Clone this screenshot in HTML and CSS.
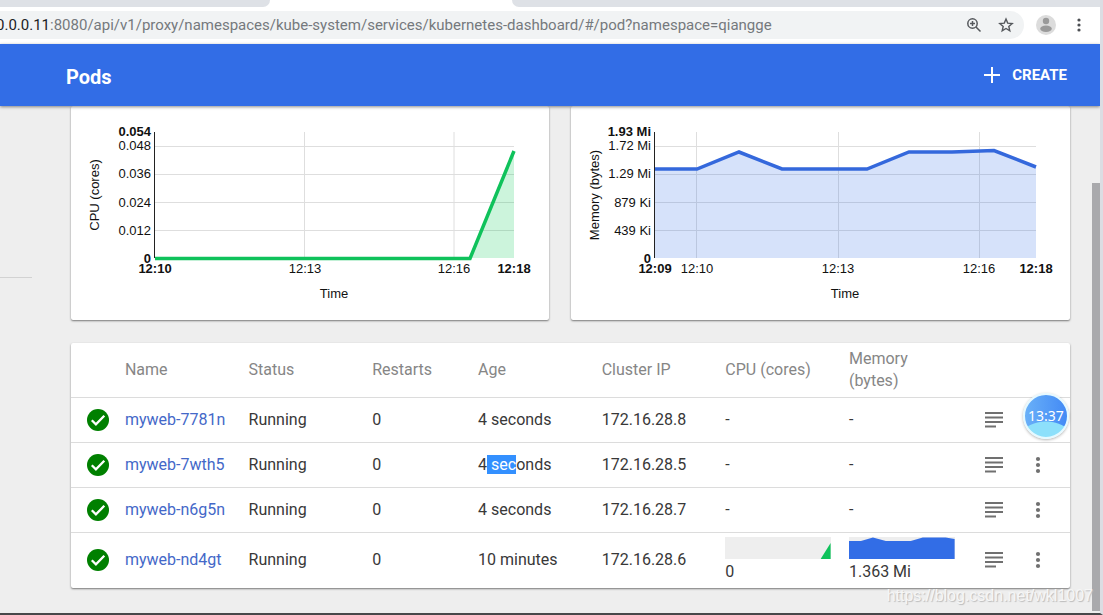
FILE: index.html
```html
<!DOCTYPE html>
<html lang="en">
<head>
<meta charset="utf-8">
<title>Pods - Kubernetes Dashboard</title>
<link rel="stylesheet" href="styles.css">
</head>
<body>
<svg class="defs" aria-hidden="true">
  <symbol id="ok" viewBox="0 0 24 24"><path fill="#008000" d="M12 1a11 11 0 1 0 0 22 11 11 0 0 0 0-22z"/><path fill="none" stroke="#fff" stroke-width="2.3" d="M5.8 12.3l4.1 4.1 8.4-8.6"/></symbol>
  <symbol id="logs" viewBox="0 0 18 16"><path fill="#707070" d="M0 0h18v2H0zM0 4.500h18v2H0zM0 9h18v2H0zM0 13.500h11v2H0z"/></symbol>
  <symbol id="more" viewBox="0 0 6 18"><circle cx="3" cy="3" r="2.100"/><circle cx="3" cy="9" r="2.100"/><circle cx="3" cy="15" r="2.100"/></symbol>
</svg>
<div class="window">
  <div class="tabs"><div class="tab-left"></div><div class="tab-active"></div><div class="tab-right"></div></div>
  <div class="toolbar">
    <div class="address">
      <div class="url"><span class="host">0.0.0.11</span>:8080/api/v1/proxy/namespaces/kube-system/services/kubernetes-dashboard/#/pod?namespace=qiangge</div>
      <button class="icon-button" aria-label="Zoom"><svg width="16" height="16" viewBox="0 0 16 16" fill="none" stroke="#55585c" stroke-width="1.500"><circle cx="6.500" cy="6.500" r="4.700"/><path d="M10 10l4.500 4.500M4 6.500h5M6.500 4v5"/></svg></button>
      <button class="icon-button" aria-label="Bookmark"><svg width="16" height="16" viewBox="0 0 16 16" fill="none" stroke="#55585c" stroke-width="1.400"><path d="M8 2l1.700 4.100 4.500.4-3.400 2.900 1 4.400L8 11.500l-3.800 2.300 1-4.400-3.400-2.900 4.500-.4z"/></svg></button>
    </div>
    <button class="icon-button" aria-label="Profile"><svg width="20" height="20" viewBox="0 0 20 20"><circle cx="10" cy="10" r="10" fill="#dcdcdc"/><circle cx="10" cy="6" r="3.200" fill="#9a9a9a"/><ellipse cx="10" cy="13.700" rx="5.800" ry="3.200" fill="#9a9a9a"/></svg></button>
    <button class="icon-button menu" aria-label="Browser menu"><svg width="4" height="14" viewBox="0 0 4 14" fill="#4c4f53"><circle cx="2" cy="2" r="1.600"/><circle cx="2" cy="7" r="1.600"/><circle cx="2" cy="12" r="1.600"/></svg></button>
  </div>
  <header class="header">
    <h1>Pods</h1>
    <button class="create"><svg width="16" height="16" viewBox="0 0 16 16"><path d="M7 0h2v7h7v2H9v7H7V9H0V7h7z" fill="#fff"/></svg>CREATE</button>
  </header>
  <div class="content">
    <nav class="sidebar" aria-label="Navigation"><hr></nav>
    <main class="main">
      <div class="charts">
        <section class="card chart">
          <svg viewBox="71 106 478 214" role="img" aria-label="CPU usage">
            <path class="grid" d="M155 146.500H514M155 174.500H514M155 202.500H514M155 230.500H514M304.500 132V258M454 132V258"/>
            <path d="M470 258L514 151V258z" fill="#00c752" opacity=".2"/>
            <path d="M154.500 132V258" stroke="#222"/>
            <path d="M155 258.500H470L514 151" fill="none" stroke="#0fc25b" stroke-width="3.500"/>
            <g class="end"><text class="b" x="151" y="136">0.054</text><text x="151" y="150">0.048</text><text x="151" y="178">0.036</text><text x="151" y="207">0.024</text><text x="151" y="235">0.012</text><text class="b" x="151" y="263">0</text></g>
            <g class="mid"><text class="b" x="155" y="273">12:10</text><text x="305" y="273">12:13</text><text x="454" y="273">12:16</text><text class="b" x="514" y="273">12:18</text><text x="334" y="298">Time</text><text transform="translate(99 195) rotate(-90)">CPU (cores)</text></g>
          </svg>
        </section>
        <section class="card chart">
          <svg viewBox="571 106 499 214" role="img" aria-label="Memory usage">
            <path class="grid" d="M655 146.500H1036M655 174.500H1036M655 202.500H1036M655 230.500H1036M696.500 132V258M838.500 132V258M979.500 132V258"/>
            <path d="M655 169H697L739 152L782 169H867L909 152H952L994 150L1036 167V258H655z" fill="#326de6" opacity=".2"/>
            <path d="M654.500 132V258" stroke="#222"/>
            <path d="M655 169H697L739 152L782 169H867L909 152H952L994 150.500L1036 167" fill="none" stroke="#3468dc" stroke-width="3.500"/>
            <g class="end"><text class="b" x="651" y="136">1.93 Mi</text><text x="651" y="150">1.72 Mi</text><text x="651" y="178">1.29 Mi</text><text x="651" y="207">879 Ki</text><text x="651" y="235">439 Ki</text><text class="b" x="651" y="263">0</text></g>
            <g class="mid"><text class="b" x="655" y="273">12:09</text><text x="697" y="273">12:10</text><text x="838" y="273">12:13</text><text x="979" y="273">12:16</text><text class="b" x="1036" y="273">12:18</text><text x="845" y="298">Time</text><text transform="translate(599 195) rotate(-90)">Memory (bytes)</text></g>
          </svg>
        </section>
      </div>
      <section class="card list">
        <table>
          <colgroup><col class="c-state"><col class="c-wide"><col class="c-wide"><col class="c-restarts"><col class="c-wide"><col class="c-wide"><col class="c-wide"><col class="c-wide"><col class="c-logs"><col></colgroup>
          <thead><tr><th></th><th>Name</th><th>Status</th><th>Restarts</th><th>Age</th><th>Cluster IP</th><th>CPU (cores)</th><th>Memory (bytes)</th><th></th><th></th></tr></thead>
          <tbody>
            <tr><td class="state"><svg><use href="#ok"/></svg></td><td><a href="#">myweb-7781n</a></td><td>Running</td><td>0</td><td>4 seconds</td><td>172.16.28.8</td><td>-</td><td>-</td><td><button class="logs" aria-label="Logs"><svg><use href="#logs"/></svg></button></td><td><button class="more" aria-label="Actions"><svg><use href="#more"/></svg></button></td></tr>
            <tr><td class="state"><svg><use href="#ok"/></svg></td><td><a href="#">myweb-7wth5</a></td><td>Running</td><td>0</td><td>4<mark> sec</mark>onds</td><td>172.16.28.5</td><td>-</td><td>-</td><td><button class="logs" aria-label="Logs"><svg><use href="#logs"/></svg></button></td><td><button class="more" aria-label="Actions"><svg><use href="#more"/></svg></button></td></tr>
            <tr><td class="state"><svg><use href="#ok"/></svg></td><td><a href="#">myweb-n6g5n</a></td><td>Running</td><td>0</td><td>4 seconds</td><td>172.16.28.7</td><td>-</td><td>-</td><td><button class="logs" aria-label="Logs"><svg><use href="#logs"/></svg></button></td><td><button class="more" aria-label="Actions"><svg><use href="#more"/></svg></button></td></tr>
            <tr class="usage"><td class="state"><svg><use href="#ok"/></svg></td><td><a href="#">myweb-nd4gt</a></td><td>Running</td><td>0</td><td>10 minutes</td><td>172.16.28.6</td>
              <td><svg class="spark" viewBox="0 0 106 22" preserveAspectRatio="none"><path d="M96 22L106 6V22z" fill="#0fc25b"/></svg>0</td>
              <td><svg class="spark" viewBox="0 0 106 22" preserveAspectRatio="none"><path d="M0 4H12L24 0.500L37 4H62L74 0.500H97L106 2V22H0z" fill="#326de6"/></svg>1.363 Mi</td>
              <td><button class="logs" aria-label="Logs"><svg><use href="#logs"/></svg></button></td><td><button class="more" aria-label="Actions"><svg><use href="#more"/></svg></button></td></tr>
          </tbody>
        </table>
      </section>
    </main>
    <div class="scrollbar"><div class="thumb"></div></div>
  </div>
</div>
<div class="clock">13:37</div>
<div class="watermark">https://blog.csdn.net/wkl1007</div>
</body>
</html>
```
FILE: styles.css
```css
* { box-sizing: border-box; }
body {
  margin: 0;
  height: 100vh;
  overflow: hidden;
  position: relative;
  background: #dcdde3;
  border-right: 3px solid #dcdde3;
  border-bottom: 2px solid #48484a;
  font: 16px/22px Roboto, sans-serif;
  color: #383838;
}
button { border: 0; padding: 0; background: none; font: inherit; color: inherit; display: flex; align-items: center; justify-content: center; }
.defs { position: absolute; width: 0; height: 0; }
.window { height: 100%; display: flex; flex-direction: column; }

.tabs { height: 7px; flex: none; display: grid; grid-template-columns: 270px 242px 1fr; background: #fff; }
.tab-left { background: #dee1e6; border-bottom-right-radius: 7px; }
.tab-right { background: #dee1e6; border-bottom-left-radius: 7px; }

.toolbar { height: 37px; flex: none; display: flex; align-items: center; gap: 12px; padding: 0 10px 2px 0; background: #fff; }
.address { flex: 1; min-width: 0; height: 28px; display: flex; align-items: center; gap: 16px; padding-right: 10px; background: #f1f3f4; border-radius: 0 14px 14px 0; }
.url { flex: 1; min-width: 0; overflow: hidden; white-space: nowrap; font: 15px/28px Roboto, sans-serif; color: #75797d; margin-left: -4px; }
.host { color: #202124; }
.menu { width: 22px; }

.header { position: relative; height: 62px; flex: none; display: flex; align-items: center; justify-content: space-between; padding: 0 33px 0 66px; background: #326de6; color: #fff; box-shadow: 0 1px 3px rgba(0, 0, 0, .45); z-index: 1; }
.header h1 { margin: 0; padding-top: 4px; font-size: 20px; line-height: 24px; font-weight: 700; }
.create { gap: 12px; font-size: 15px; font-weight: 700; }

.content { flex: 1; min-height: 0; display: flex; background: #eee; }
.sidebar { flex: none; width: 71px; padding: 171px 39px 0 0; }
.sidebar hr { margin: 0; border: 0; border-top: 1px solid #d2d2d2; }
.main { flex: 1; min-width: 0; padding-right: 22px; }
.card { background: #fff; border-radius: 2px; box-shadow: 0 1px 2px rgba(0, 0, 0, .5); }
.charts { display: grid; grid-template-columns: 478fr 499fr; gap: 22px; align-items: stretch; }
.chart svg { display: block; width: 100%; font: 13px "Liberation Sans", Arial, sans-serif; fill: #111; }
.grid { stroke: #dedede; fill: none; }
.end { text-anchor: end; }
.mid { text-anchor: middle; }
.b { font-weight: 700; }

.list { margin-top: 23px; }
table { width: 100%; table-layout: fixed; border-collapse: collapse; }
.c-state { width: 5.400%; }
.c-wide { width: 12.375%; }
.c-restarts { width: 10.600%; }
.c-logs { width: 4.300%; }
th { height: 54px; padding: 4px 0; text-align: left; font-weight: 400; color: #868686; }
th:nth-child(8) { padding-right: 50px; }
td { height: 45px; padding: 0; border-top: 1px solid #dcdcdc; }
td a { color: #4468c8; text-decoration: none; }
mark { background: #3390ff; color: #fff; }
.usage td { height: 56px; }
.usage td:nth-child(7), .usage td:nth-child(8) { padding: 4px 18px 4px 0; }
.state svg { display: block; width: 24px; height: 24px; margin-left: 15px; }
.spark { display: block; width: 100%; height: 22px; margin-bottom: 2px; background: #eee; }
.logs { width: 42px; }
.logs svg { width: 18px; height: 16px; }
.more { width: 44px; }
.more svg { width: 6px; height: 18px; fill: #707070; }

.scrollbar { flex: none; width: 8px; padding: 77px 0 2px; }
.thumb { height: 100%; background: #a9a9ac; }

.clock { position: absolute; top: 393px; right: 31px; width: 46px; height: 46px; border: 2px solid #e6f9ff; border-radius: 50%; background: radial-gradient(circle at 50% 150%, #8de0fb 0 36px, transparent 37px), linear-gradient(90deg, #69b0f8, #438af5); box-shadow: 0 1px 3px rgba(0, 0, 0, .3); color: #fff; font: 14px/42px "Noto Sans", sans-serif; text-align: center; z-index: 2; }
.watermark { position: absolute; right: 7px; bottom: 6px; font: 16px/22px "Liberation Sans", Arial, sans-serif; color: #f6f6f6; text-shadow: 1px 1px 1px #bbb; z-index: 2; }
```
